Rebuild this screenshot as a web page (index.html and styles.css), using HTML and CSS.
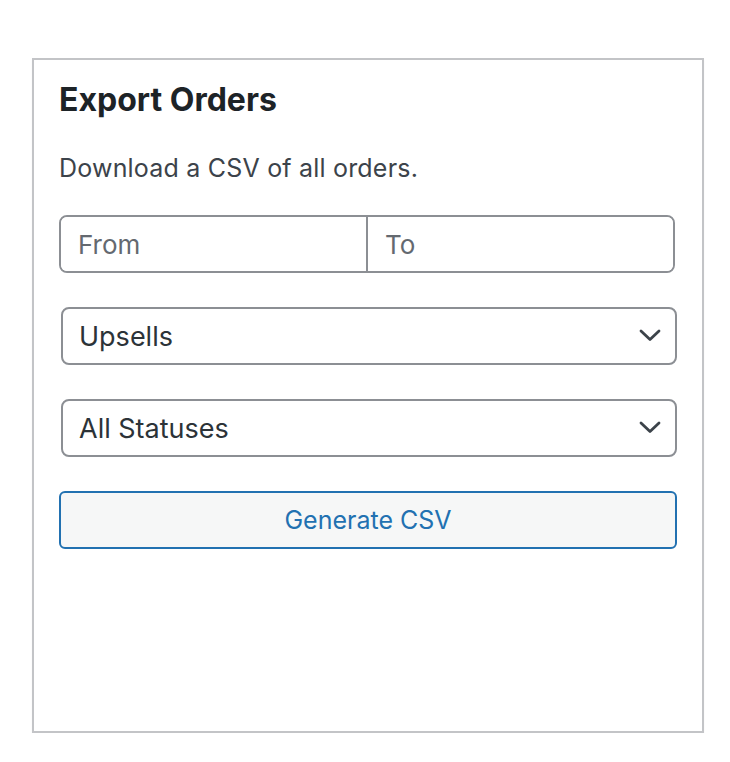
FILE: index.html
```html
<!DOCTYPE html>
<html lang="en">
<head>
<meta charset="utf-8">
<title>Export Orders</title>
<link rel="stylesheet" href="styles.css">
</head>
<body>
<div class="page">
  <section class="panel">
    <h2 class="panel-title">Export Orders</h2>
    <p class="panel-desc">Download a CSV of all orders.</p>
    <div class="date-range">
      <input class="date-input" type="text" placeholder="From">
      <input class="date-input date-input-to" type="text" placeholder="To">
    </div>
    <div class="select-wrap">
      <select class="select">
        <option>Upsells</option>
      </select>
      <svg class="chevron" viewBox="0 0 22 13" width="22" height="13" aria-hidden="true"><path d="M2 2 L11 10.5 L20 2" fill="none" stroke="#3c434a" stroke-width="2.8" stroke-linecap="round" stroke-linejoin="round"/></svg>
    </div>
    <div class="select-wrap">
      <select class="select">
        <option>All Statuses</option>
      </select>
      <svg class="chevron" viewBox="0 0 22 13" width="22" height="13" aria-hidden="true"><path d="M2 2 L11 10.5 L20 2" fill="none" stroke="#3c434a" stroke-width="2.8" stroke-linecap="round" stroke-linejoin="round"/></svg>
    </div>
    <button class="btn" type="button">Generate CSV</button>
  </section>
</div>
</body>
</html>
```
FILE: styles.css
```css
* { box-sizing: border-box; }
html, body { margin: 0; padding: 0; background: #ffffff; }
body { font-family: Inter, "Noto Sans", "Liberation Sans", sans-serif; color: #1d2327; }
.page { padding: 58px 0 0 32px; }
.panel {
  width: 672px;
  height: 675px;
  border: 2px solid #c3c4c7;
  background: #fff;
  box-shadow: 0 2px 2px rgba(0,0,0,0.04);
  padding: 20px 25px 0 25px;
}
.panel-title {
  margin: 0;
  font-size: 32px;
  font-weight: 700;
  line-height: 40px;
  color: #1d2327;
}
.panel-desc {
  margin: 32px 0 0;
  font-size: 25px;
  line-height: 32px;
  letter-spacing: 0.2px;
  color: #3c434a;
}
.date-range {
  display: flex;
  width: 616px;
  height: 58px;
  margin-top: 31px;
  border: 2px solid #8c8f94;
  border-radius: 8px;
  overflow: hidden;
}
.date-input {
  flex: 1;
  min-width: 0;
  border: 0;
  padding: 0 0 0 17px;
  font-family: inherit;
  font-size: 26px;
  color: #2c3338;
  background: #fff;
  outline: none;
}
.date-input::placeholder { color: #646970; opacity: 1; }
.date-input-to { border-left: 2px solid #8c8f94; }
.select-wrap {
  position: relative;
  width: 616px;
  height: 58px;
  margin: 34px 0 0 2px;
}
.select {
  appearance: none;
  -webkit-appearance: none;
  width: 100%;
  height: 100%;
  border: 2px solid #8c8f94;
  border-radius: 8px;
  background: #fff;
  padding: 0 50px 0 16px;
  font-family: inherit;
  font-size: 27px;
  color: #2c3338;
}
.chevron {
  position: absolute;
  right: 16px;
  top: 22px;
  pointer-events: none;
}
.btn {
  display: block;
  width: 618px;
  height: 58px;
  margin-top: 34px;
  border: 2px solid #2271b1;
  border-radius: 6px;
  background: #f6f7f7;
  color: #2271b1;
  font-family: inherit;
  font-size: 25px;
}
```
